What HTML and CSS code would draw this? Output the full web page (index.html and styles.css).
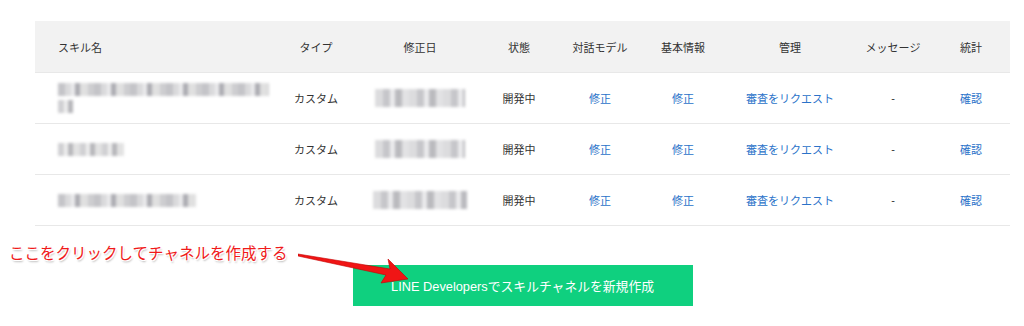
FILE: index.html
```html
<!DOCTYPE html>
<html lang="ja">
<head>
    <meta charset="UTF-8">
    <title>スキル一覧</title>
    <link rel="stylesheet" href="styles.css">
</head>
<body>

    <div class="page">
        <table class="skill-table">
            <colgroup>
                <col style="width: 235px">
                <col style="width: 92px">
                <col style="width: 116px">
                <col style="width: 82px">
                <col style="width: 80px">
                <col style="width: 86px">
                <col style="width: 128px">
                <col style="width: 78px">
                <col style="width: 78px">
            </colgroup>
            <thead>
                <tr>
                    <th class="name-col">スキル名</th>
                    <th>タイプ</th>
                    <th>修正日</th>
                    <th>状態</th>
                    <th>対話モデル</th>
                    <th>基本情報</th>
                    <th>管理</th>
                    <th>メッセージ</th>
                    <th>統計</th>
                </tr>
            </thead>
            <tbody>
                <tr>
                    <td class="name-col">
                        <span class="blur blur-a" style="width: 211px"></span>
                        <span class="blur blur-b" style="width: 15px"></span>
                    </td>
                    <td>カスタム</td>
                    <td><span class="blur blur-date" style="width: 90px"></span></td>
                    <td>開発中</td>
                    <td><a href="#">修正</a></td>
                    <td><a href="#">修正</a></td>
                    <td><a href="#">審査をリクエスト</a></td>
                    <td>-</td>
                    <td><a href="#">確認</a></td>
                </tr>
                <tr>
                    <td class="name-col"><span class="blur blur-b" style="width: 66px"></span></td>
                    <td>カスタム</td>
                    <td><span class="blur blur-date" style="width: 90px"></span></td>
                    <td>開発中</td>
                    <td><a href="#">修正</a></td>
                    <td><a href="#">修正</a></td>
                    <td><a href="#">審査をリクエスト</a></td>
                    <td>-</td>
                    <td><a href="#">確認</a></td>
                </tr>
                <tr>
                    <td class="name-col"><span class="blur blur-a" style="width: 138px"></span></td>
                    <td>カスタム</td>
                    <td><span class="blur blur-date" style="width: 94px"></span></td>
                    <td>開発中</td>
                    <td><a href="#">修正</a></td>
                    <td><a href="#">修正</a></td>
                    <td><a href="#">審査をリクエスト</a></td>
                    <td>-</td>
                    <td><a href="#">確認</a></td>
                </tr>
            </tbody>
        </table>

        <div class="create-area">
            <p class="note">ここをクリックしてチャネルを作成する</p>
            <svg class="note-arrow" width="120" height="40" viewBox="0 0 120 40">
                <path d="M0 4 L92 19 L90 9 L110 29 L83 33 L88 25 L0 6 Z" fill="#f01515" stroke="#c40000" stroke-width="0.6" stroke-linejoin="round"/>
            </svg>
            <button class="btn-create">LINE Developersでスキルチャネルを新規作成</button>
        </div>
    </div>

</body>
</html>
```

FILE: styles.css
```css
body {
    margin: 0;
    padding: 0;
    background-color: #fff;
    font-family: "Liberation Sans", "Noto Sans CJK JP", sans-serif;
    color: #333;
}

.page {
    padding: 21px 14px 0 35px;
}

.skill-table {
    width: 975px;
    border-collapse: collapse;
    table-layout: fixed;
    font-size: 11px;
}

.skill-table th {
    background-color: #f2f2f2;
    font-weight: normal;
    color: #333;
    height: 51px;
    text-align: center;
    padding: 0;
}

.skill-table td {
    height: 50px;
    text-align: center;
    padding: 0;
    border-bottom: 1px solid #e8e8e8;
}

.skill-table thead tr {
    border-bottom: 1px solid #e8e8e8;
}

.skill-table .name-col {
    text-align: left;
    padding-left: 23px;
}

.skill-table a {
    color: #2a72c9;
    text-decoration: none;
}

/* mosaic placeholders */
.blur {
    display: block;
    height: 13px;
    filter: blur(1.4px);
}

.blur-a {
    background:
        repeating-linear-gradient(90deg, #c4c4c8 0 7px, #dadadc 7px 13px, #ececee 13px 17px, #acacb2 17px 22px, #e0e0e0 22px 30px, #cdcdd0 30px 36px);
}

.blur-b {
    background: repeating-linear-gradient(90deg, #d0d0d3 0 6px, #efefef 6px 10px, #b6b6ba 10px 15px, #e2e2e2 15px 22px);
}

.blur-a + .blur-b {
    margin-top: 4px;
}

.blur-date {
    height: 18px;
    margin: 0 auto;
    background: repeating-linear-gradient(90deg, #dcdcde 0 8px, #c6c6ca 8px 15px, #ebebed 15px 20px, #bababe 20px 27px, #e2e2e4 27px 34px);
}

.create-area {
    position: relative;
    width: 975px;
    padding-top: 39px;
    display: flex;
    justify-content: center;
}

.note {
    position: absolute;
    left: -26px;
    top: 15px;
    margin: 0;
    font-size: 15.5px;
    color: #f01a1a;
    font-family: "Noto Sans CJK JP", sans-serif;
    text-shadow: 1px 1px 0 #fff, -1px -1px 0 #fff, 1px -1px 0 #fff, -1px 1px 0 #fff, 1px 2px 2px rgba(0,0,0,0.3);
}

.note-arrow {
    position: absolute;
    left: 263px;
    top: 24px;
}

.btn-create {
    width: 340px;
    height: 41px;
    border: none;
    background-color: #0fd07f;
    color: #fff;
    font-size: 12.8px;
    font-family: "Liberation Sans", "Noto Sans CJK JP", sans-serif;
    cursor: pointer;
}
```
